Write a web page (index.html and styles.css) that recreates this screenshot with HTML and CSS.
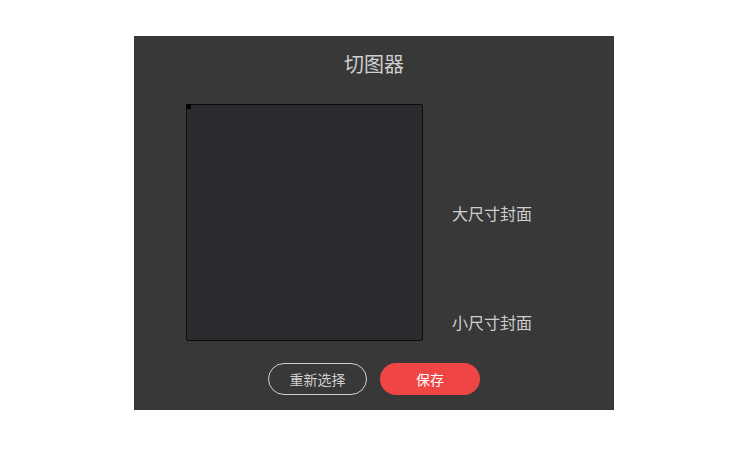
FILE: index.html
```html
<!DOCTYPE html>
<html lang="zh">
<head>
<meta charset="utf-8">
<title>切图器</title>
<link rel="stylesheet" href="styles.css">
</head>
<body>
<div class="panel">
  <div class="title">切图器</div>
  <div class="main">
    <div class="crop-box"><span class="corner"></span></div>
    <div class="previews">
      <div class="label">大尺寸封面</div>
      <div class="label">小尺寸封面</div>
    </div>
  </div>
  <div class="actions">
    <button class="btn btn-outline">重新选择</button>
    <button class="btn btn-primary">保存</button>
  </div>
</div>
</body>
</html>
```
FILE: styles.css
```css
html, body {
  margin: 0;
  padding: 0;
  background: #ffffff;
}
body {
  font-family: "Noto Sans CJK SC", "Noto Sans", sans-serif;
}
.panel {
  width: 480px;
  height: 374px;
  margin: 36px 0 0 134px;
  background: #383838;
  display: flex;
  flex-direction: column;
  box-sizing: border-box;
  padding-top: 17px;
}
.title {
  text-align: center;
  font-size: 20px;
  line-height: 22px;
  color: #cfcfcf;
  height: 22px;
}
.main {
  display: flex;
  margin-top: 29px;
  padding-left: 52px;
}
.crop-box {
  position: relative;
  width: 237px;
  height: 237px;
  box-sizing: border-box;
  border: 1px solid #0c0c0c;
  border-radius: 2px;
  background: #2a2b2f;
}
.corner {
  position: absolute;
  left: -1px;
  top: -1px;
  width: 5px;
  height: 5px;
  background: #000;
}
.previews {
  display: flex;
  flex-direction: column;
  margin-left: 29px;
  padding-top: 99px;
  gap: 89px;
}
.label {
  font-size: 16px;
  line-height: 20px;
  color: #cfcfcf;
}
.actions {
  display: flex;
  justify-content: center;
  gap: 13px;
  margin-top: 22px;
}
.btn {
  width: 100px;
  height: 32px;
  border-radius: 16px;
  font-family: "Noto Sans CJK SC", "Noto Sans", sans-serif;
  font-size: 14px;
  padding: 0;
  box-sizing: border-box;
}
.btn-outline {
  width: 99px;
  background: transparent;
  border: 1px solid #d0d0d0;
  color: #cfcfcf;
}
.btn-primary {
  background: #f04545;
  border: none;
  color: #ffffff;
}
```
